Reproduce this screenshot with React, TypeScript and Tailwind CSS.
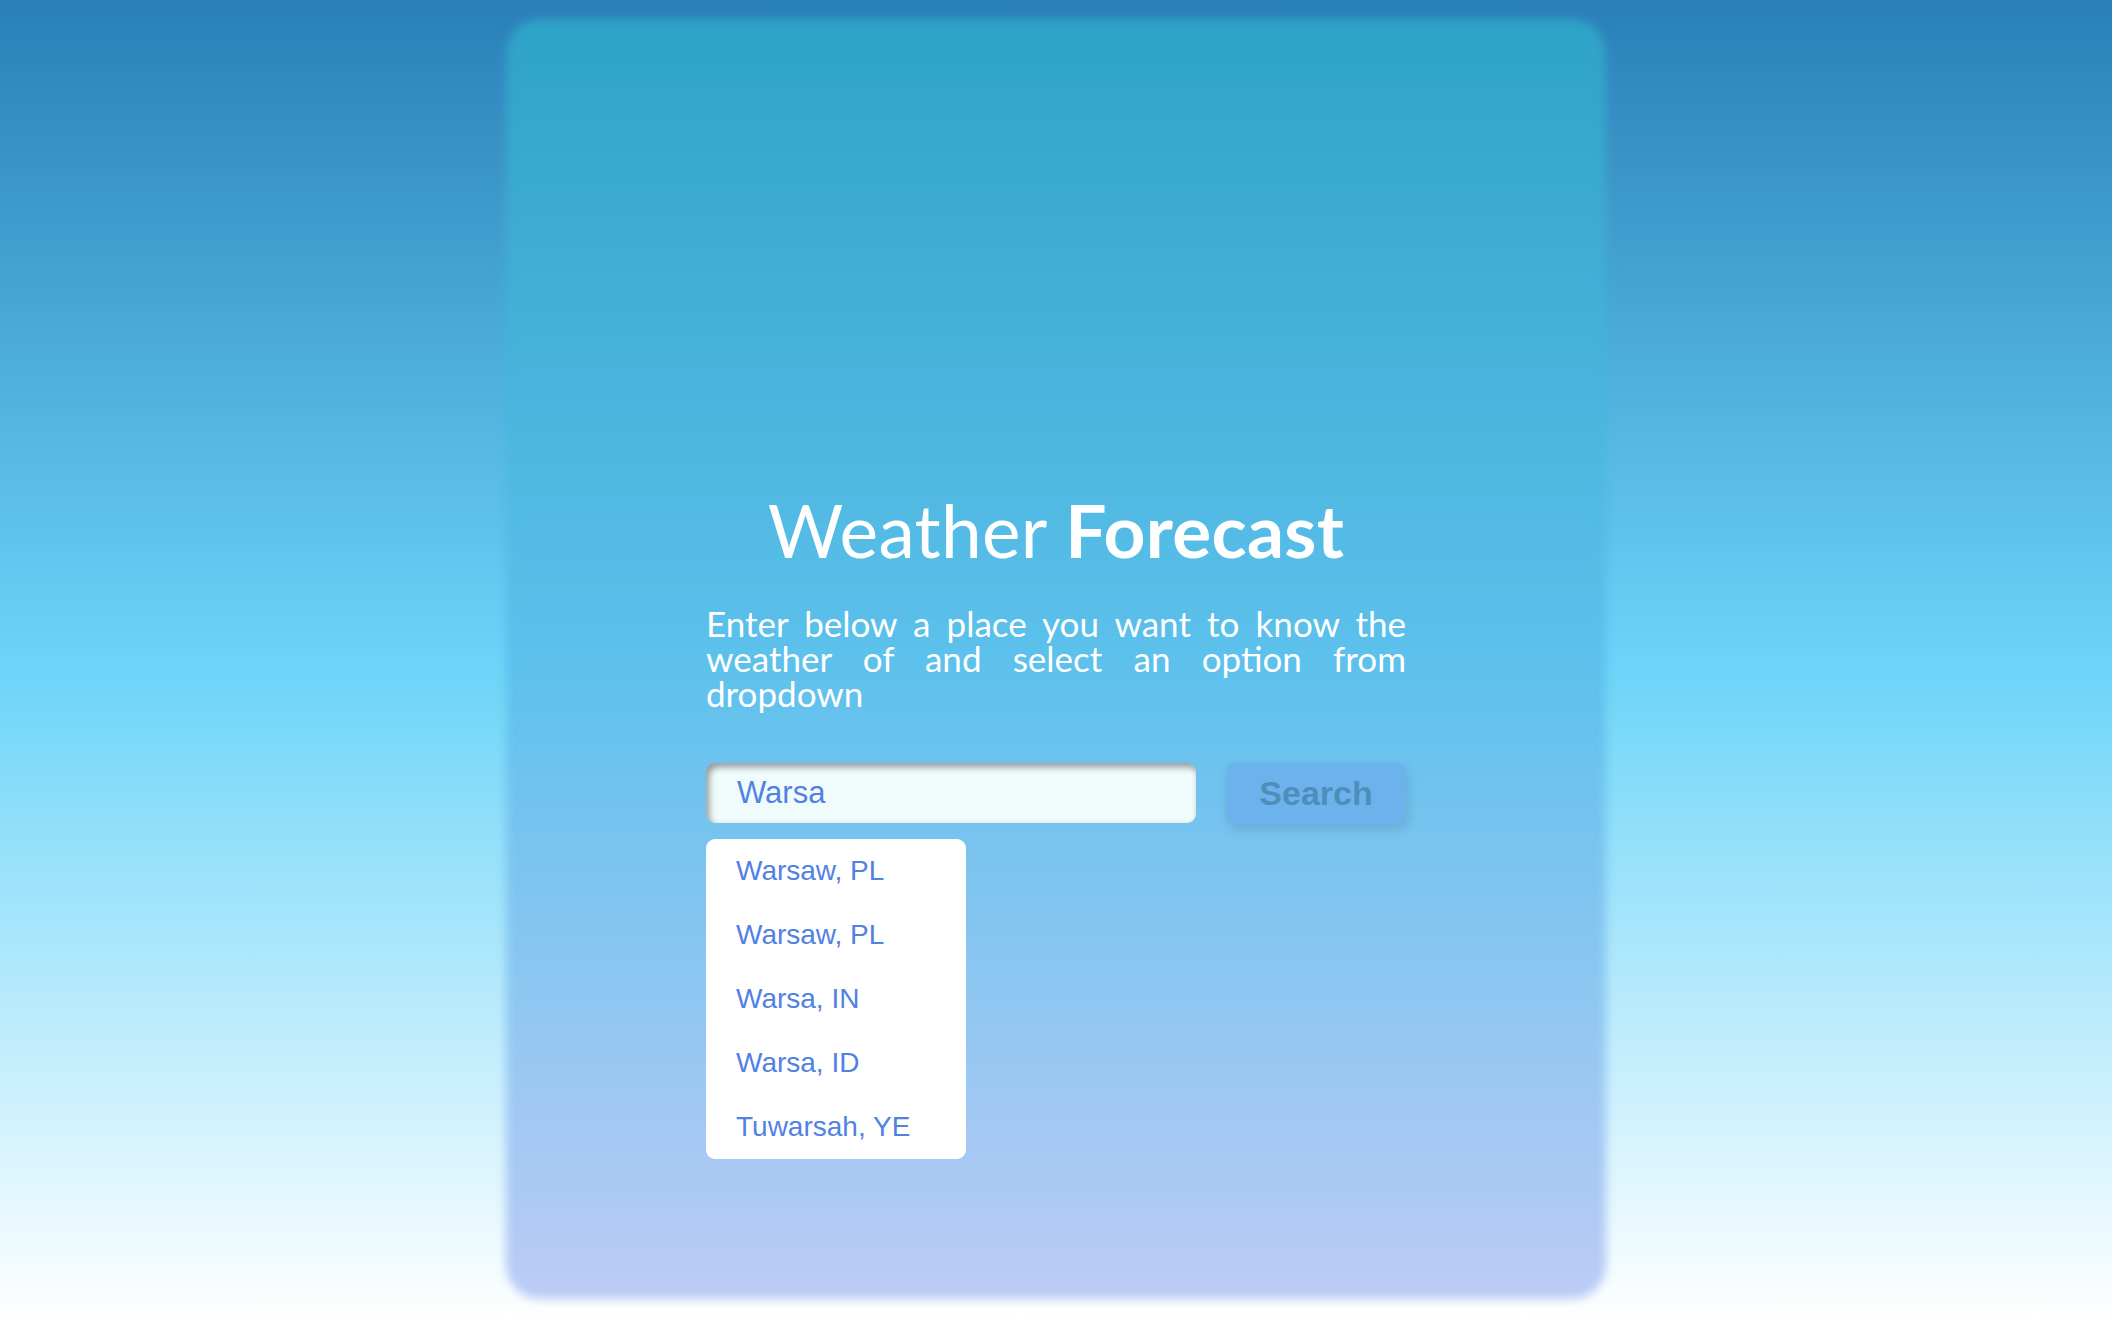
import React, { useState } from 'react';

const suggestions = ['Warsaw, PL', 'Warsaw, PL', 'Warsa, IN', 'Warsa, ID', 'Tuwarsah, YE'];

export default function App() {
  const [query, setQuery] = useState('Warsa');

  return (
    <div className="min-h-[1320px] w-full flex justify-center pt-[19px] bg-[linear-gradient(to_bottom,#2a7fb8_0%,#6bd4f8_50%,#ffffff_100%)]">
      <div className="relative isolate w-[1100px] h-[1280px] flex flex-col items-center justify-center">
        {/* blurred card background */}
        <div className="absolute inset-0 -z-10 rounded-[34px] blur-[5px] bg-[linear-gradient(to_bottom,#2ea2c7_0%,#5cc1ec_50%,#bccbf6_100%)]" />

        <div className="w-[700px] flex flex-col pb-[7px] font-['Lato',sans-serif] text-white">
          <h1 className="text-center text-[73px] leading-[84px] tracking-[0.3px]">
            <span className="font-normal">Weather </span>
            <span className="font-bold">Forecast</span>
          </h1>

          <p className="mt-[34px] text-[35px] leading-[35px] text-justify">
            Enter below a place you want to know the weather of and select an option from dropdown
          </p>

          <div className="relative mt-[52px] flex gap-[30px] font-['Liberation_Sans',Arial,sans-serif]">
            <input
              value={query}
              onChange={(e) => setQuery(e.target.value)}
              className="w-[490px] h-[60px] rounded-[9px] bg-[#f0fbfc] pl-[31px] text-[31px] text-[#5281e2] outline-none shadow-[inset_3px_4px_7px_rgba(0,0,0,0.4)]"
            />
            <button className="w-[180px] h-[61px] rounded-[9px] bg-[#6cb2ec] text-[34px] font-bold text-[#4e8fba] shadow-[2px_5px_12px_rgba(0,0,0,0.12)]">
              Search
            </button>

            <ul className="absolute left-0 top-[76px] w-[260px] rounded-[9px] bg-white">
              {suggestions.map((s, i) => (
                <li key={i} className="h-[64px] flex items-center pl-[30px] text-[28px] text-[#5281e2]">
                  {s}
                </li>
              ))}
            </ul>
          </div>
        </div>
      </div>
    </div>
  );
}
